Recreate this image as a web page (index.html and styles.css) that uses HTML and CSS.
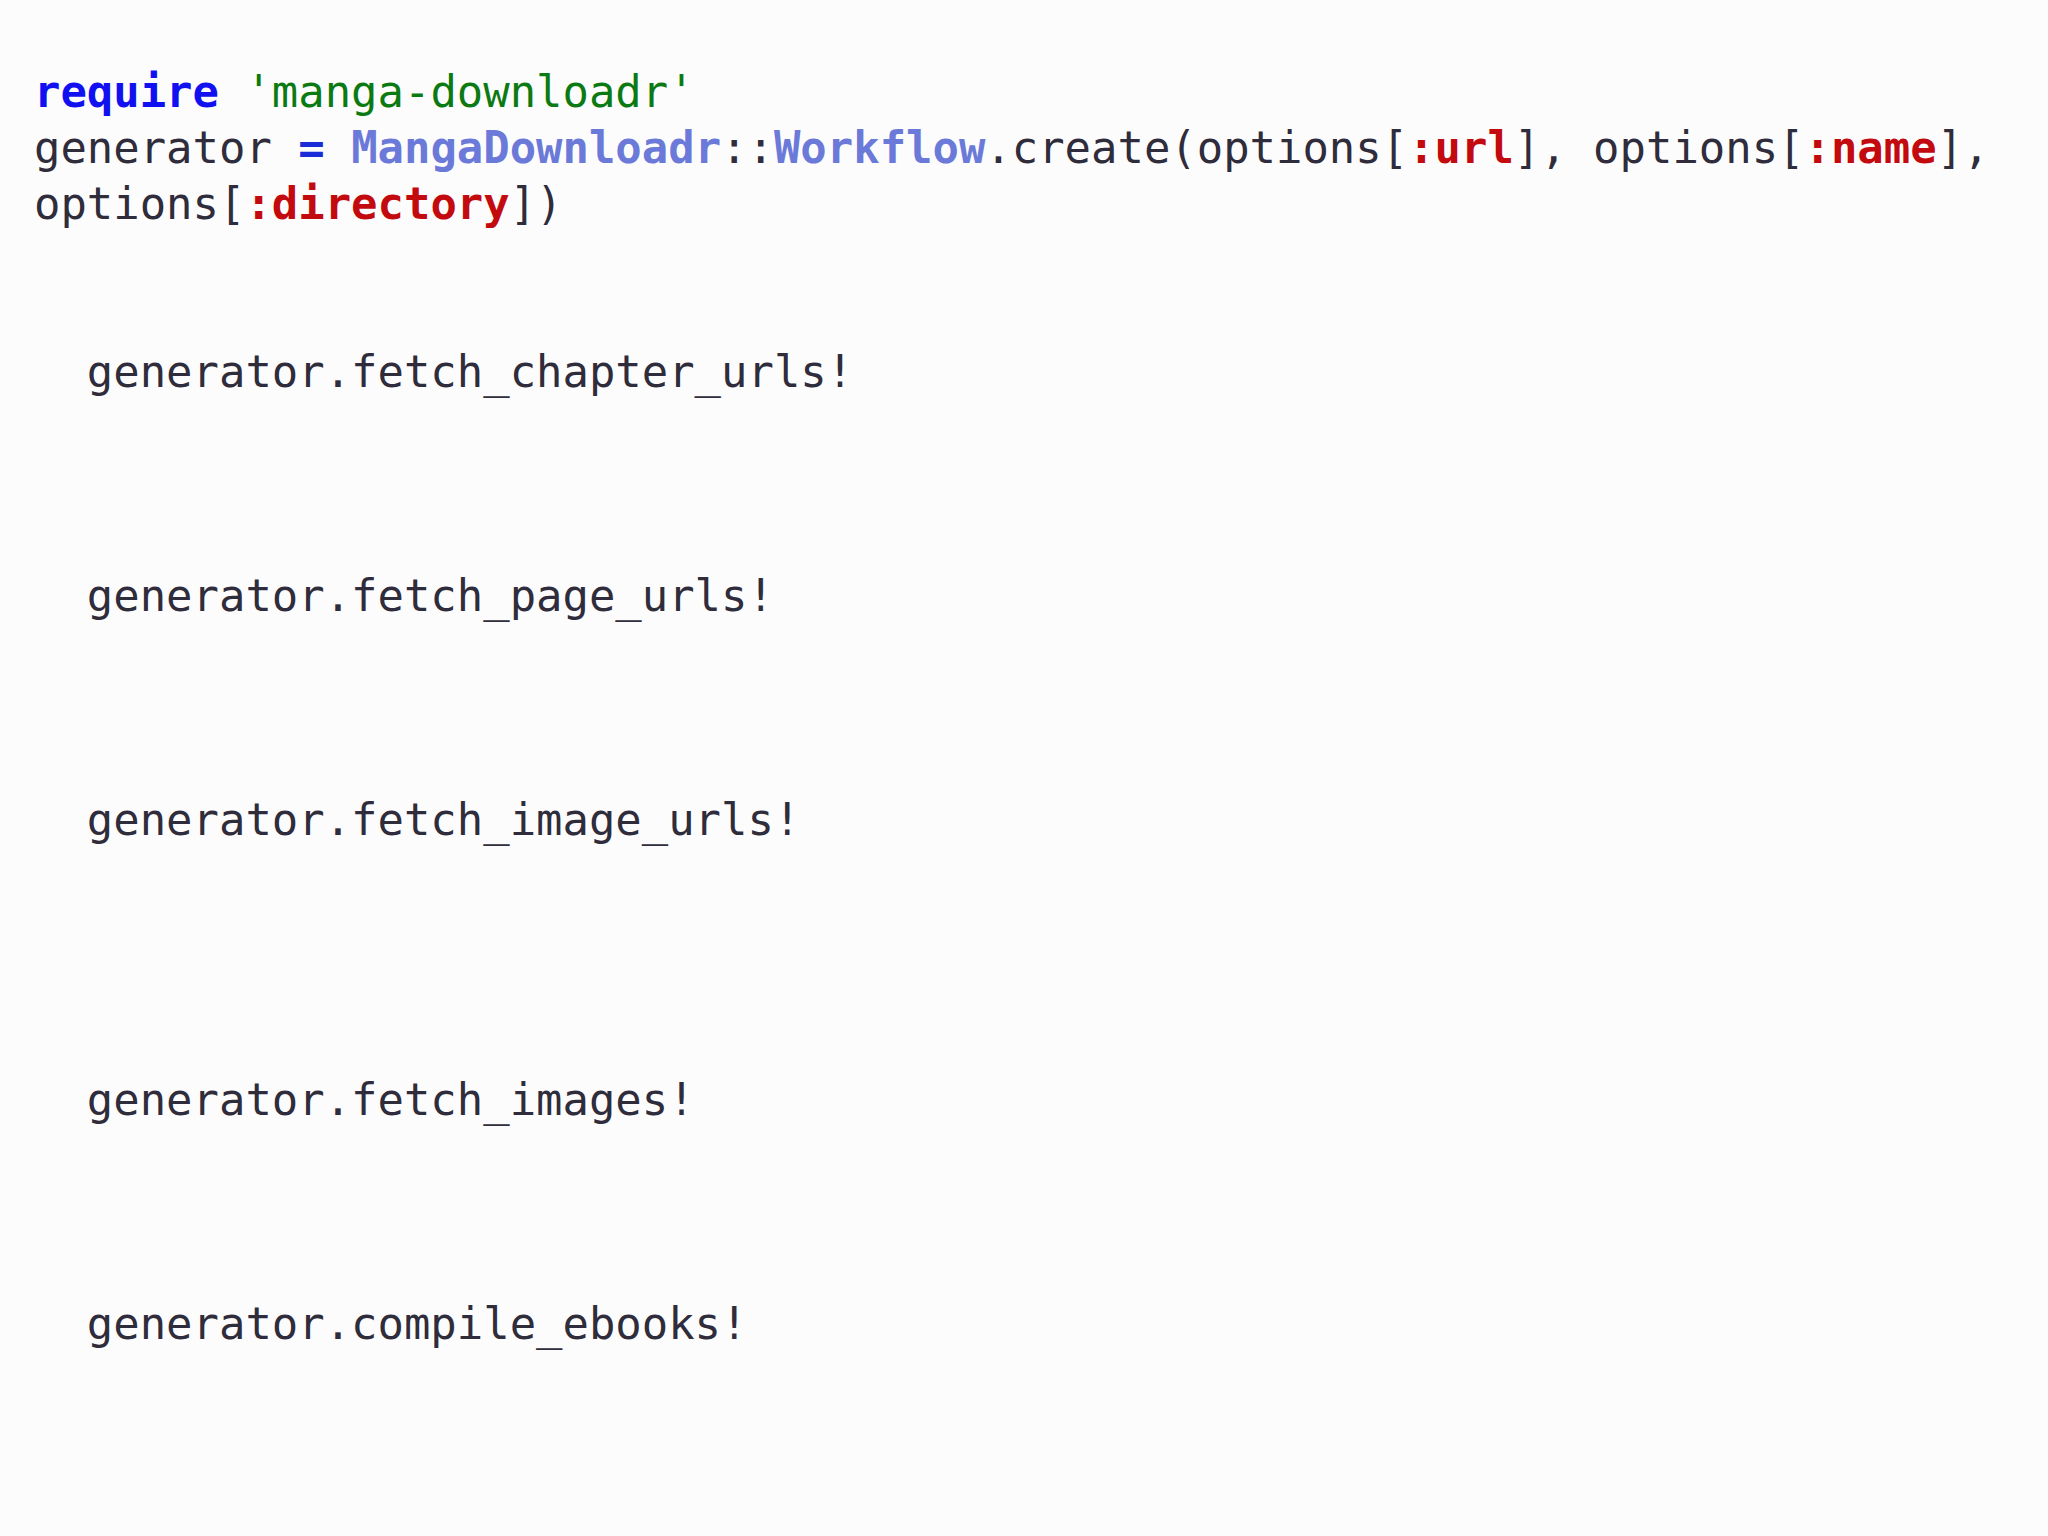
FILE: index.html
```html
<!DOCTYPE html>
<html>
<head>
<meta charset="utf-8">
<link rel="stylesheet" href="styles.css">
</head>
<body>
<div class="slide">
<pre class="code"><span class="kw">require</span> <span class="str">'manga-downloadr'</span>
generator <span class="op">=</span> <span class="cls">MangaDownloadr</span>::<span class="cls">Workflow</span>.create(options[<span class="sym">:url</span>], options[<span class="sym">:name</span>],
options[<span class="sym">:directory</span>])


  generator.fetch_chapter_urls!



  generator.fetch_page_urls!



  generator.fetch_image_urls!




  generator.fetch_images!



  generator.compile_ebooks!</pre>
</div>
</body>
</html>
```

FILE: styles.css
```css
html, body {
  margin: 0;
  padding: 0;
  background: #fdfcfd;
}
.slide {
  width: 2048px;
  height: 1536px;
  box-sizing: border-box;
  padding: 64px 0 0 34px;
}
.code {
  margin: 0;
  font-family: "DejaVu Sans Mono", "Liberation Mono", monospace;
  font-size: 43.9px;
  line-height: 56px;
  color: #2f2c3b;
  white-space: pre;
}
.kw {
  color: #1010f0;
  font-weight: bold;
}
.str {
  color: #0c7a12;
}
.op {
  color: #1a2bd8;
  font-weight: bold;
}
.cls {
  color: #6b7ad8;
  font-weight: bold;
}
.sym {
  color: #c20a0f;
  font-weight: bold;
}
```
